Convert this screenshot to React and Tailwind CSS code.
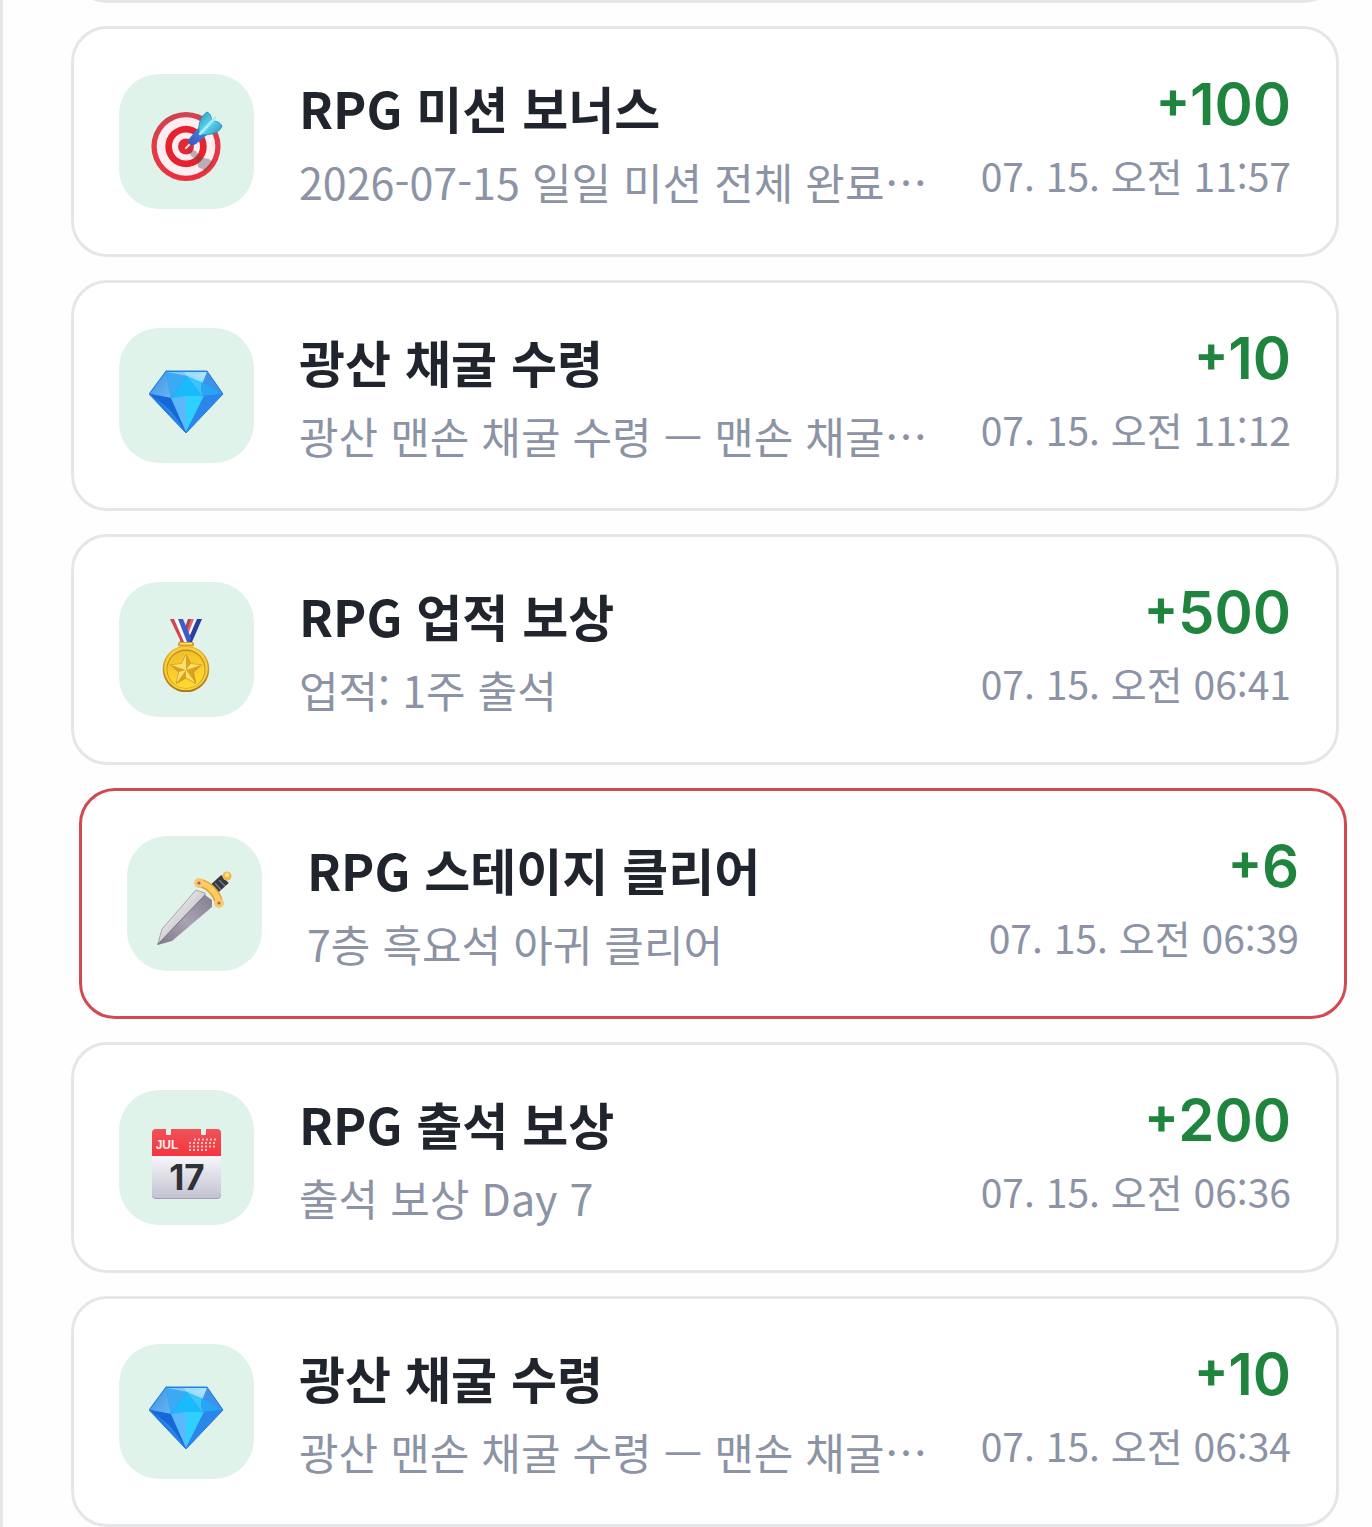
import React from "react";

function TargetIcon() {
  return (
    <svg viewBox="0 0 75 75" className="size-[75px]" aria-hidden="true">
      <defs>
        <radialGradient id="targetRed" cx="50%" cy="60%" r="55%">
          <stop offset="0" stopColor="#e3101c" />
          <stop offset="0.8" stopColor="#ea3644" />
          <stop offset="1" stopColor="#d0434f" />
        </radialGradient>
        <linearGradient id="dartBody" x1="0" y1="1" x2="1" y2="0">
          <stop offset="0" stopColor="#3a55c4" />
          <stop offset="1" stopColor="#3f8be0" />
        </linearGradient>
        <linearGradient id="dartWing" x1="0" y1="0" x2="1" y2="1">
          <stop offset="0" stopColor="#2493bd" />
          <stop offset="0.5" stopColor="#5fd6ee" />
          <stop offset="1" stopColor="#1f8fb8" />
        </linearGradient>
      </defs>
      <circle cx="37" cy="37.5" r="34.6" fill="url(#targetRed)" />
      <circle cx="37" cy="37.5" r="29.3" fill="#fdeef2" />
      <circle cx="37" cy="37.5" r="20.7" fill="#e5222e" />
      <circle cx="37" cy="37.5" r="14" fill="#fdeef2" />
      <circle cx="37" cy="37.5" r="8" fill="#e02b37" />
      <path d="M39 40 L47 42 L51 48 L60 50 L64 53 L57 62 L49 58 L49 52 L42 47Z" fill="#5b4a50" opacity="0.4" />
      <path d="M37 39 L42 34" stroke="#f3dbe2" strokeWidth="2" strokeLinecap="round" />
      <path d="M39 31 L50 18 Q57 18 58 26 L47 35 Q40 39 39 31Z" fill="url(#dartBody)" />
      <path d="M50 23 C49 14 52 7 58 3 C62 5 63 9 62 13 C66 11 71 13 73 17 C71 23 64 26 53 26Z" fill="url(#dartWing)" stroke="#2388b4" strokeWidth="0.8" />
      <path d="M51 25 L66 9" stroke="#a5eefa" strokeWidth="2.6" strokeLinecap="round" />
    </svg>
  );
}

function GemIcon() {
  return (
    <svg viewBox="0 0 75 75" className="size-[75px]" aria-hidden="true">
      <defs>
        <linearGradient id="gemTop" x1="0" y1="0" x2="1" y2="1">
          <stop offset="0" stopColor="#3f8fe0" />
          <stop offset="1" stopColor="#63b8f5" />
        </linearGradient>
        <linearGradient id="gemShine" x1="0.2" y1="1" x2="0.8" y2="0">
          <stop offset="0" stopColor="#1fb9fb" />
          <stop offset="1" stopColor="#c3edff" />
        </linearGradient>
      </defs>
      <path d="M17 8 H58 L74 31 L38 69 Q37 70.500 36 69 L0 31Z" fill="#2688ea" stroke="#2b7bdc" strokeWidth="1" strokeLinejoin="round" />
      <path d="M17 9 L1 31 L22 35Z" fill="url(#gemTop)" />
      <path d="M17 9 L22 35 L38 13Z" fill="#3ba9f3" />
      <path d="M17 9 H58 L38 13Z" fill="#79c9f8" />
      <path d="M38 13 L58 9 L52 25Z" fill="url(#gemShine)" />
      <path d="M38 13 L34 9 H58 L53 19Z" fill="#a8e2fd" opacity="0.75" />
      <path d="M58 9 L52 25 L73 31Z" fill="#3d93ea" />
      <path d="M38 13 L22 35 L37 34 L53 33Z" fill="#19bbfc" />
      <path d="M38 13 L53 33 L52 19Z" fill="#3cc4fc" />
      <path d="M52 19 L53 33 L73 31Z" fill="#26a6f6" />
      <path d="M1 31 L22 35 L37 69Z" fill="#1668d8" />
      <path d="M22 35 L37 33 V69Z" fill="#5bb8fa" />
      <path d="M37 33 L55 33 L37 69Z" fill="#2fd0fd" />
      <path d="M55 33 L73 31 L37 69Z" fill="#2b86ea" />
      <path d="M4 33 L22 48 L37 69Z" fill="#2f96f0" opacity="0.7" />
    </svg>
  );
}

function MedalIcon() {
  return (
    <svg viewBox="0 0 75 75" className="size-[75px]" aria-hidden="true">
      <defs>
        <linearGradient id="medalRim" x1="0" y1="0" x2="0" y2="1">
          <stop offset="0" stopColor="#e7b52c" />
          <stop offset="1" stopColor="#a8761c" />
        </linearGradient>
        <linearGradient id="medalFace" x1="0" y1="0" x2="0.3" y2="1">
          <stop offset="0" stopColor="#eebc28" />
          <stop offset="1" stopColor="#ffd92e" />
        </linearGradient>
      </defs>
      <path d="M39 2 H43 L34 25 H31Z" fill="#b93e4b" />
      <path d="M42 2 H46 L37 25 H34Z" fill="#d46a72" />
      <path d="M45 2 H48 L40 25 H36Z" fill="#f8f6fb" />
      <path d="M48 2 H53 L43 25 H38Z" fill="#293f9d" />
      <path d="M21 2 H26 L36 25 H32Z" fill="#cf4650" />
      <path d="M25 2 H30 L39 25 H35Z" fill="#fbf7fc" />
      <path d="M29 2 H34 L42 21 L41 25 H38Z" fill="#3b5ec8" />
      <rect x="29" y="25" width="16" height="4.500" rx="1.500" fill="#d99f1e" />
      <rect x="31" y="26" width="12" height="1.500" fill="#ffe785" />
      <circle cx="37" cy="52" r="23.300" fill="url(#medalRim)" />
      <circle cx="37" cy="51.500" r="21.800" fill="#f7cf3c" />
      <circle cx="37" cy="52" r="19.500" fill="#c38b1b" />
      <circle cx="37" cy="52.500" r="18.600" fill="url(#medalFace)" />
      <path d="M37 38 L41.500 47 L52 48 L44 55 L46.500 66 L37 60.500 L27.500 66 L30 55 L22 48 L32.500 47Z" fill="#dca321" stroke="#d39b20" strokeWidth="1.500" strokeLinejoin="round" />
      <path d="M37 38 V53 L32.500 47Z M22 48 L37 53 L32.500 47Z M30 55 L37 53 L27.500 66Z M37 60.500 L37 53 L46.500 66Z M52 48 L37 53 L41.500 47Z" fill="#fde26a" />
    </svg>
  );
}

function DaggerIcon() {
  return (
    <svg viewBox="0 0 75 75" className="size-[75px]" aria-hidden="true">
      <defs>
        <linearGradient id="bladeLight" x1="0" y1="0" x2="1" y2="1">
          <stop offset="0.200" stopColor="#f4f4f5" />
          <stop offset="0.800" stopColor="#b4b2b8" />
        </linearGradient>
        <linearGradient id="bladeDark" x1="0" y1="1" x2="1" y2="0">
          <stop offset="0" stopColor="#7d7785" />
          <stop offset="0.500" stopColor="#aaa2b4" />
          <stop offset="1" stopColor="#857e90" />
        </linearGradient>
      </defs>
      <path d="M0.500 74 L5 58 L39 19 L48 22 L48 25Z" fill="url(#bladeLight)" stroke="#98949d" strokeWidth="0.800" strokeLinejoin="round" />
      <path d="M0.500 74 L48 24 L55 29 L55 36 L15 70Z" fill="url(#bladeDark)" />
      <path d="M1 73 L48 24" stroke="#77727e" strokeWidth="1" />
      <path d="M57 18 L68 8" stroke="#343641" strokeWidth="11" />
      <path d="M58 12 L64 19 M62 9 L68 15" stroke="#777985" strokeWidth="1.500" />
      <circle cx="70" cy="5" r="4.500" fill="#f1b747" />
      <circle cx="70" cy="4" r="2.200" fill="#ffe094" />
      <path d="M42 12 C51 13 60 22 62 32" fill="none" stroke="#e2a03a" strokeWidth="8.500" strokeLinecap="round" />
      <path d="M42 11.500 C51 13 60 22 62 31.500" fill="none" stroke="#ffcd5e" strokeWidth="5.500" strokeLinecap="round" />
      <circle cx="42" cy="12" r="4.900" fill="#f9c873" />
      <circle cx="62" cy="32" r="4.900" fill="#f9c873" />
      <circle cx="42" cy="12" r="1.600" fill="#a96434" />
      <circle cx="62" cy="32" r="1.600" fill="#b9603b" />
    </svg>
  );
}

function CalendarIcon() {
  return (
    <svg viewBox="0 0 75 75" className="size-[75px]" aria-hidden="true">
      <defs>
        <linearGradient id="calPage" x1="0" y1="0" x2="0" y2="1">
          <stop offset="0" stopColor="#f8f8fb" />
          <stop offset="1" stopColor="#c3c2d2" />
        </linearGradient>
        <linearGradient id="calHead" x1="0" y1="0" x2="0" y2="1">
          <stop offset="0" stopColor="#ef5358" />
          <stop offset="1" stopColor="#f5343e" />
        </linearGradient>
      </defs>
      <rect x="3" y="20" width="69" height="54" rx="4" fill="#a2a1b0" />
      <path d="M3 30 H72 V69 Q72 73 68 73 H7 Q3 73 3 69Z" fill="url(#calPage)" />
      <path d="M7 4 H17 V9 Q17 10 18 10 H21 Q22 10 22 9 V4 H52 V9 Q52 10 53 10 H56 Q57 10 57 9 V4 H68 Q72 4 72 8 V31 H3 V8 Q3 4 7 4Z" fill="url(#calHead)" />
      <path d="M45 14.500 H67 M40 18 H67 M40 21.500 H67 M40 25 H60" stroke="#ffc4c6" strokeWidth="2" strokeDasharray="2 2" />
      <text x="18" y="24" textAnchor="middle" fontSize="12" fontWeight="700" fontFamily="Liberation Sans, sans-serif" fill="#fff0f0">JUL</text>
      <text x="38" y="65" textAnchor="middle" fontSize="35" fontWeight="700" fontFamily="Inter, sans-serif" fill="#303036">17</text>
    </svg>
  );
}

const entries = [
  { icon: TargetIcon, title: "RPG 미션 보너스", detail: "2026-07-15 일일 미션 전체 완료⋯", amount: "100", time: "07. 15. 오전 11:57" },
  { icon: GemIcon, title: "광산 채굴 수령", detail: "광산 맨손 채굴 수령 — 맨손 채굴⋯", amount: "10", time: "07. 15. 오전 11:12" },
  { icon: MedalIcon, title: "RPG 업적 보상", detail: "업적: 1주 출석", amount: "500", time: "07. 15. 오전 06:41" },
  { icon: DaggerIcon, title: "RPG 스테이지 클리어", detail: "7층 흑요석 아귀 클리어", amount: "6", time: "07. 15. 오전 06:39", active: true },
  { icon: CalendarIcon, title: "RPG 출석 보상", detail: "출석 보상 Day 7", amount: "200", time: "07. 15. 오전 06:36" },
  { icon: GemIcon, title: "광산 채굴 수령", detail: "광산 맨손 채굴 수령 — 맨손 채굴⋯", amount: "10", time: "07. 15. 오전 06:34" },
];

function EntryCard({ icon: Icon, title, detail, amount, time, active }) {
  return (
    <li
      className={
        "flex items-center gap-[45px] rounded-[36px] border-[3px] bg-white px-[45px] py-[39px] " +
        (active ? "translate-x-2 border-[#d14a52]" : "border-[#e5e6ea]")
      }
    >
      <div className="flex size-[135px] shrink-0 items-center justify-center rounded-[40px] bg-[#dff3ea] pt-[10px]">
        <Icon />
      </div>
      <div className="min-w-0 flex-1 whitespace-nowrap">
        <h2 className="text-[50px] leading-[79px] font-bold text-[#1f242d]">{title}</h2>
        <p className="text-[43px] leading-[68px] text-[#8b93a5]">{detail}</p>
      </div>
      <div className="shrink-0 text-right whitespace-nowrap">
        <p className="flex items-start justify-end font-['Inter',sans-serif] text-[58px] leading-[66px] font-semibold text-[#1f843d]">
          <span className="text-[50px] leading-[58px] font-bold">+</span>
          <span>{amount}</span>
        </p>
        <p className="text-[39px] leading-[76px] text-[#8b93a5]">{time}</p>
      </div>
    </li>
  );
}

export default function App() {
  return (
    <main
      lang="ko"
      className="h-screen overflow-hidden border-l-[3px] border-[#e5e6ea] bg-[#fefefe] pr-[33px] pl-[68px] font-['Noto_Sans_CJK_KR',sans-serif]"
    >
      <div className="flex h-[3px] items-end overflow-hidden">
        <div className="h-24 w-full shrink-0 rounded-[36px] border-[3px] border-[#e5e6ea] bg-white" />
      </div>
      <ul className="flex flex-col gap-[23px] pt-[23px]">
        {entries.map((entry, index) => (
          <EntryCard key={index} {...entry} />
        ))}
      </ul>
    </main>
  );
}
